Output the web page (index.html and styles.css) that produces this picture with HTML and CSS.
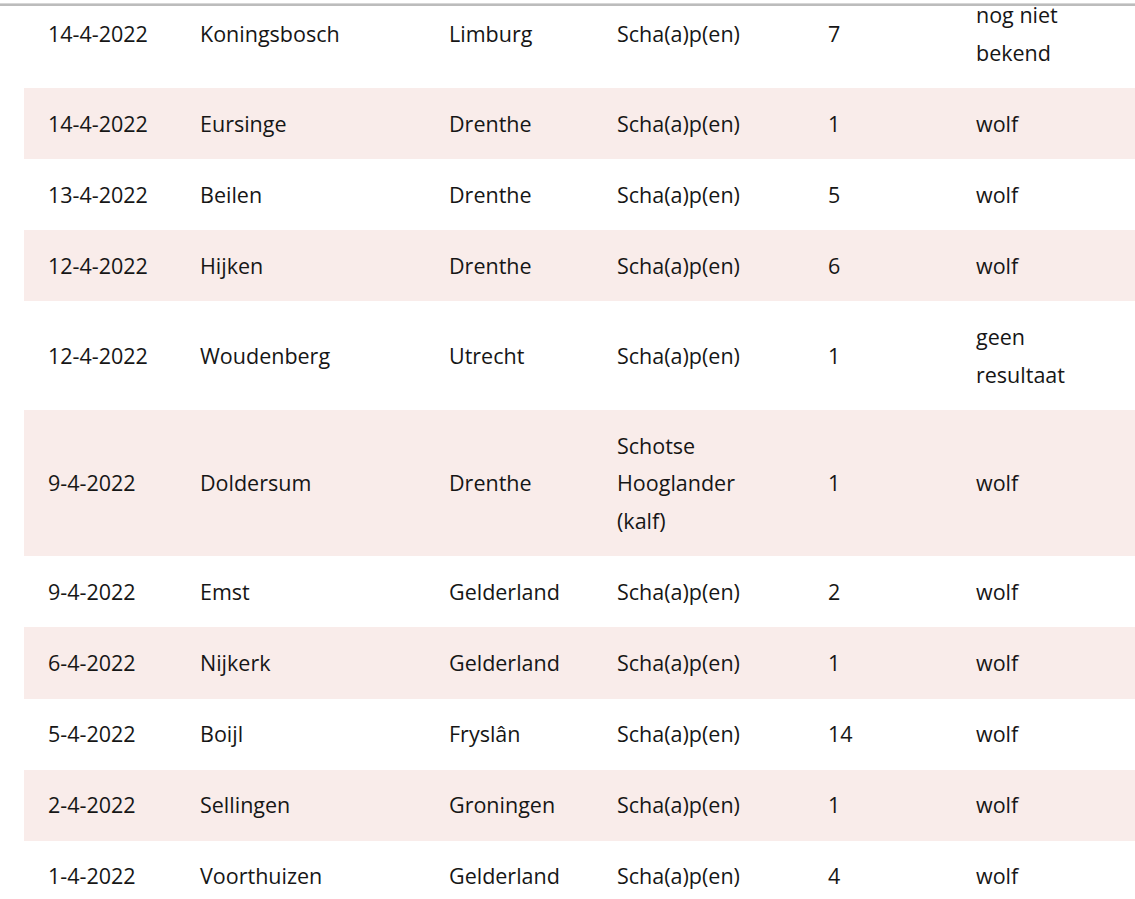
FILE: index.html
```html
<!DOCTYPE html>
<html lang="nl">
<head>
<meta charset="utf-8">
<title>Schademeldingen</title>
<link rel="stylesheet" href="styles.css">
</head>
<body>
<div class="topline"></div>
<main class="page">
<table class="tbl">
<colgroup>
<col class="c1"><col class="c2"><col class="c3"><col class="c4"><col class="c5"><col class="c6">
</colgroup>
<tbody>
<tr><td>14-4-2022</td><td>Koningsbosch</td><td>Limburg</td><td>Scha(a)p(en)</td><td>7</td><td>nog niet bekend</td></tr>
<tr><td>14-4-2022</td><td>Eursinge</td><td>Drenthe</td><td>Scha(a)p(en)</td><td>1</td><td>wolf</td></tr>
<tr><td>13-4-2022</td><td>Beilen</td><td>Drenthe</td><td>Scha(a)p(en)</td><td>5</td><td>wolf</td></tr>
<tr><td>12-4-2022</td><td>Hijken</td><td>Drenthe</td><td>Scha(a)p(en)</td><td>6</td><td>wolf</td></tr>
<tr><td>12-4-2022</td><td>Woudenberg</td><td>Utrecht</td><td>Scha(a)p(en)</td><td>1</td><td>geen resultaat</td></tr>
<tr><td>9-4-2022</td><td>Doldersum</td><td>Drenthe</td><td>Schotse Hooglander (kalf)</td><td>1</td><td>wolf</td></tr>
<tr><td>9-4-2022</td><td>Emst</td><td>Gelderland</td><td>Scha(a)p(en)</td><td>2</td><td>wolf</td></tr>
<tr><td>6-4-2022</td><td>Nijkerk</td><td>Gelderland</td><td>Scha(a)p(en)</td><td>1</td><td>wolf</td></tr>
<tr><td>5-4-2022</td><td>Boijl</td><td>Fryslân</td><td>Scha(a)p(en)</td><td>14</td><td>wolf</td></tr>
<tr><td>2-4-2022</td><td>Sellingen</td><td>Groningen</td><td>Scha(a)p(en)</td><td>1</td><td>wolf</td></tr>
<tr><td>1-4-2022</td><td>Voorthuizen</td><td>Gelderland</td><td>Scha(a)p(en)</td><td>4</td><td>wolf</td></tr>
</tbody>
</table>
</main>
</body>
</html>
```
FILE: styles.css
```css
html, body {
  margin: 0;
  padding: 0;
  background: #ffffff;
  overflow: hidden;
}
body {
  font-family: "Open Sans", "Noto Sans", sans-serif;
  font-size: 21.5px;
  color: #161616;
}
.topline {
  position: fixed;
  top: 3px;
  left: 0;
  right: 0;
  height: 2px;
  background: #bcbcbc;
  border-top: 1px solid #d6d6d6;
  z-index: 2;
}
.page {
  padding-left: 24px;
  margin-top: -20.6px;
}
.tbl {
  width: 1111px;
  table-layout: fixed;
  border-collapse: collapse;
  border-spacing: 0;
}
.c1 { width: 152px; }
.c2 { width: 249px; }
.c3 { width: 168px; }
.c4 { width: 211px; }
.c5 { width: 148px; }
.c6 { width: 183px; }
.tbl td {
  padding: 16.75px 24px;
  line-height: 37.6px;
  vertical-align: middle;
  text-align: left;
}
.tbl tr:nth-child(even) td {
  background: #f9ecea;
}
```
